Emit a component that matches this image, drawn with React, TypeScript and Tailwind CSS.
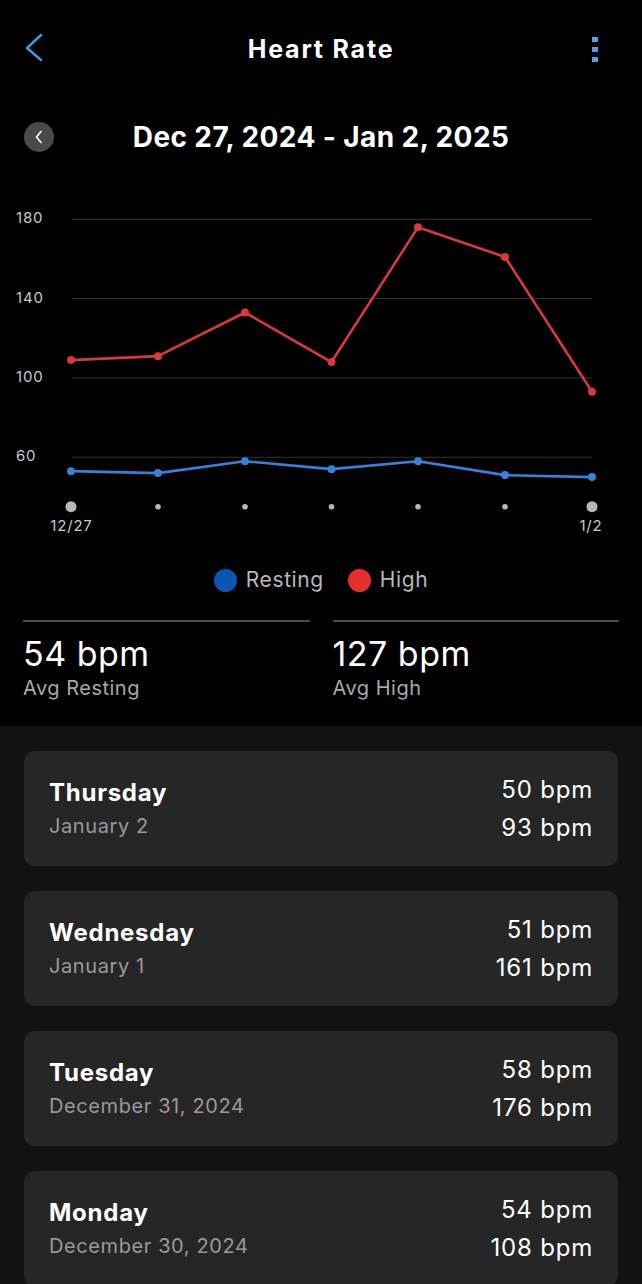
import React from "react";

const red = [109, 111, 133, 108, 176, 161, 93];
const blue = [53, 52, 58, 54, 58, 51, 50];
const xs = [71, 158, 245, 331.5, 418, 505, 592];
const yOf = (v: number) => 43.3 + (180 - v) * 1.983;

const days = [
  { d: "Thursday", date: "January 2", r: 50, h: 93 },
  { d: "Wednesday", date: "January 1", r: 51, h: 161 },
  { d: "Tuesday", date: "December 31, 2024", r: 58, h: 176 },
  { d: "Monday", date: "December 30, 2024", r: 54, h: 108 },
];

function Chart() {
  const grid = [180, 140, 100, 60];
  const pts = (arr: number[]) => arr.map((v, i) => `${xs[i]},${yOf(v)}`).join(" ");
  return (
    <svg width={642} height={364} viewBox="0 0 642 364" className="block">
      {grid.map((g) => (
        <g key={g}>
          <line x1={72} x2={592} y1={yOf(g)} y2={yOf(g)} stroke="#333333" strokeWidth={1} />
          <text x={16} y={yOf(g)} dominantBaseline="middle" fill="#c8c8c8" fontSize={15} letterSpacing={0.8} fontFamily="Inter, sans-serif">
            {g}
          </text>
        </g>
      ))}
      <polyline points={pts(red)} fill="none" stroke="#d63a3c" strokeWidth={2.6} strokeLinejoin="round" />
      {red.map((v, i) => (
        <circle key={"r" + i} cx={xs[i]} cy={yOf(v)} r={4} fill="#d63a3c" />
      ))}
      <polyline points={pts(blue)} fill="none" stroke="#3a80d6" strokeWidth={2.6} strokeLinejoin="round" />
      {blue.map((v, i) => (
        <circle key={"b" + i} cx={xs[i]} cy={yOf(v)} r={4} fill="#3a80d6" />
      ))}
      {xs.map((x, i) => (
        <circle key={"d" + i} cx={x} cy={330.7} r={i === 0 || i === 6 ? 5.5 : 2.8} fill="#b8b8b8" />
      ))}
      <text x={71.5} y={350.7} textAnchor="middle" dominantBaseline="middle" fill="#c8c8c8" fontSize={15} letterSpacing={0.8} fontFamily="Inter, sans-serif">
        12/27
      </text>
      <text x={591} y={350.7} textAnchor="middle" dominantBaseline="middle" fill="#c8c8c8" fontSize={15} letterSpacing={0.8} fontFamily="Inter, sans-serif">
        1/2
      </text>
    </svg>
  );
}

export default function App() {
  return (
    <div className="min-h-screen bg-[#121212] text-white" style={{ fontFamily: "Inter, 'Liberation Sans', sans-serif" }}>
      <div className="bg-black">
        <div className="relative flex h-[98px] items-center justify-center">
          <svg className="absolute left-[20px] top-[29px]" width={30} height={40} viewBox="0 0 30 40">
            <polyline points="21,6 7,19 21,31" fill="none" stroke="#4a8fe0" strokeWidth={2.6} strokeLinecap="round" strokeLinejoin="round" />
          </svg>
          <h1 className="text-[25px] font-bold leading-none tracking-[1.8px]">Heart Rate</h1>
          <div className="absolute left-[592px] top-[37px] flex flex-col gap-[5px]">
            <div className="h-[5px] w-[6px] bg-[#5b9ee6]" />
            <div className="h-[5px] w-[6px] bg-[#5b9ee6]" />
            <div className="h-[5px] w-[6px] bg-[#5b9ee6]" />
          </div>
        </div>
        <div className="relative flex h-[78px] items-center justify-center">
          <div className="absolute left-[24px] top-[24px] flex h-[30px] w-[30px] items-center justify-center rounded-full bg-[#4a4a4a]">
            <svg width={10} height={14} viewBox="0 0 10 14">
              <polyline points="7,1.5 2.5,7 7,12.5" fill="none" stroke="#ffffff" strokeWidth={1.6} strokeLinecap="round" strokeLinejoin="round" />
            </svg>
          </div>
          <h2 className="text-[28px] font-bold leading-none tracking-[0.4px]">Dec 27, 2024 - Jan 2, 2025</h2>
        </div>
        <Chart />
        <div className="flex h-[80px] items-center justify-center gap-[9px]">
          <div className="h-[23px] w-[23px] rounded-full bg-[#0b55b5]" />
          <span className="text-[21px] tracking-[0.6px] text-[#b8b8b8]">Resting</span>
          <div className="ml-[15px] h-[23px] w-[23px] rounded-full bg-[#e3302f]" />
          <span className="text-[21px] tracking-[0.6px] text-[#b8b8b8]">High</span>
        </div>
        <div className="grid grid-cols-2 gap-[23px] px-[23px] pb-[26px]">
          <div className="border-t-2 border-[#4a4a4a] pt-[12px]">
            <div className="text-[34px] leading-[40px] tracking-[0.5px]">54 bpm</div>
            <div className="mt-[2px] text-[20px] leading-[24px] tracking-[0.5px] text-[#a8a8a8]">Avg Resting</div>
          </div>
          <div className="border-t-2 border-[#4a4a4a] pt-[12px]">
            <div className="text-[34px] leading-[40px] tracking-[0.5px]">127 bpm</div>
            <div className="mt-[2px] text-[20px] leading-[24px] tracking-[0.5px] text-[#a8a8a8]">Avg High</div>
          </div>
        </div>
      </div>
      <div className="flex flex-col gap-[25px] px-[24px] pt-[25px] pb-[25px]">
        {days.map((d) => (
          <div key={d.d} className="flex h-[115px] items-center justify-between rounded-[10px] bg-[#262626] px-[25px]">
            <div className="flex flex-col">
              <div className="text-[24px] font-bold leading-[30px] tracking-[0.75px]">{d.d}</div>
              <div className="mt-[5px] text-[20px] leading-[26px] tracking-[0.6px] text-[#9a9a9a]">{d.date}</div>
            </div>
            <div className="flex flex-col items-end">
              <div className="text-[24px] leading-[30px] tracking-[0.8px]">{d.r} bpm</div>
              <div className="mt-[8px] text-[24px] leading-[30px] tracking-[0.8px]">{d.h} bpm</div>
            </div>
          </div>
        ))}
      </div>
    </div>
  );
}
